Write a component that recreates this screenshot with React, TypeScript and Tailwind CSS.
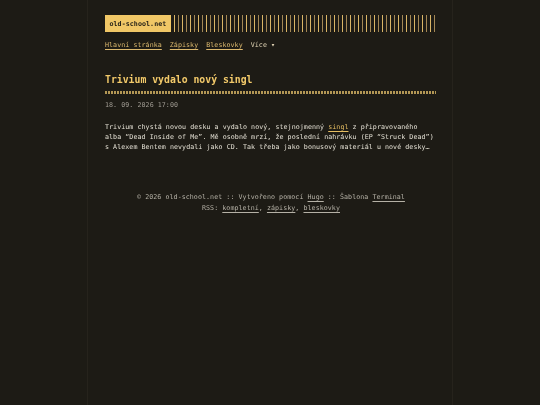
import React from 'react';

const mono = { fontFamily: '"DejaVu Sans Mono", "Liberation Mono", monospace' };

const navLinks = ['Hlavní stránka', 'Zápisky', 'Bleskovky'];

const App: React.FC = () => {
  return (
    <div className="min-h-[405px] w-full bg-[#1d1b15]" style={mono}>
      <div className="mx-auto min-h-[405px] w-[366px] border-x border-[#26231c] pl-[17px] pr-[15px] text-[6.65px] leading-[10px] tracking-[0.06px] text-[#e4e0d4] [will-change:transform]">
        {/* header */}
        <header className="pt-[15px]">
          <div className="flex items-stretch">
            <div className="flex h-[17px] items-center bg-[#f0c766] px-[4.5px] font-bold text-[#1d1b15]">
              old-school.net
            </div>
            <div className="ml-[3px] mr-[1px] h-[17px] flex-1 bg-[repeating-linear-gradient(90deg,#d9b566_0_1px,transparent_1px_4px,#a48855_4px_5px,transparent_5px_8px)]" />
          </div>
          <nav className="mt-[8px] flex items-center gap-[8px] text-[#dcb96e]">
            {navLinks.map((l) => (
              <a key={l} href="#" className="underline underline-offset-[1.5px]">
                {l}
              </a>
            ))}
            <span className="text-[#e0d4b4]">Více ▾</span>
          </nav>
        </header>

        {/* post */}
        <article className="mt-[24px]">
          <h1 className="text-[9.8px] font-bold leading-[12px] tracking-normal text-[#f3ca6a]">Trivium vydalo nový singl</h1>
          <div className="mt-[5px] mr-[1px] h-[3px] bg-[repeating-linear-gradient(90deg,#b39755_0_2px,transparent_2px_3px)]" />
          <div className="mt-[6px] text-[#a29d94]">18. 09. 2026 17:00</div>
          <p className="mt-[12px]">
            Trivium chystá novou desku a vydalo nový, stejnojmenný{' '}
            <a href="#" className="text-[#e6be62] underline underline-offset-[1.5px]">singl</a> z připravovaného
            alba “Dead Inside of Me”. Mě osobně mrzí, že poslední nahrávku (EP “Struck Dead”) s Alexem Bentem
            nevydali jako CD. Tak třeba jako bonusový materiál u nové desky…
          </p>
        </article>

        {/* footer */}
        <footer className="mt-[40px] text-center leading-[11px] text-[#b5b1a6]">
          <div>
            © 2026 old-school.net :: Vytvořeno pomocí{' '}
            <a href="#" className="underline underline-offset-[1.5px]">Hugo</a> :: Šablona{' '}
            <a href="#" className="underline underline-offset-[1.5px]">Terminal</a>
          </div>
          <div>
            RSS: <a href="#" className="underline underline-offset-[1.5px]">kompletní</a>,{' '}
            <a href="#" className="underline underline-offset-[1.5px]">zápisky</a>,{' '}
            <a href="#" className="underline underline-offset-[1.5px]">bleskovky</a>
          </div>
        </footer>
      </div>
    </div>
  );
};

export default App;
